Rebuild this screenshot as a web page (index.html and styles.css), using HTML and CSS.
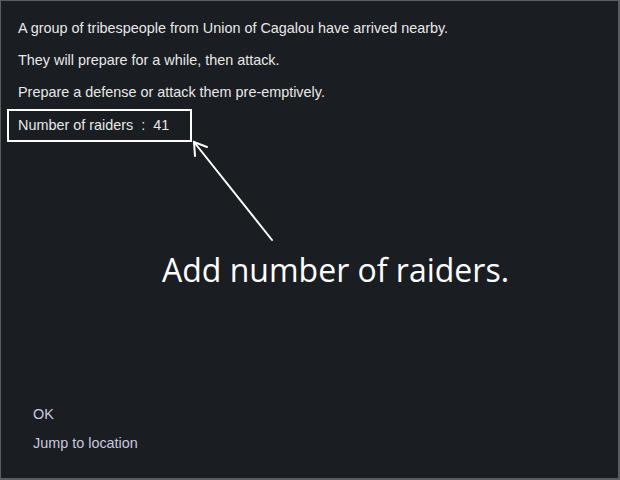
FILE: index.html
```html
<!DOCTYPE html>
<html>
<head>
<meta charset="utf-8">
<link rel="stylesheet" href="styles.css">
</head>
<body>
<div class="dialog">
  <div class="messages">
    <p class="line">A group of tribespeople from Union of Cagalou have arrived nearby.</p>
    <p class="line">They will prepare for a while, then attack.</p>
    <p class="line">Prepare a defense or attack them pre-emptively.</p>
    <p class="line highlight">Number of raiders&nbsp;&nbsp;:&nbsp;&nbsp;41</p>
  </div>
  <svg class="arrow" width="620" height="480" viewBox="0 0 620 480">
    <g stroke="#ffffff" stroke-width="2" fill="none" stroke-linecap="round">
      <line x1="272" y1="240" x2="194" y2="142"/>
      <polyline points="195,156 194,142 207,147"/>
    </g>
  </svg>
  <div class="callout">Add number of raiders.</div>
  <div class="options">
    <div class="option">OK</div>
    <div class="option">Jump to location</div>
  </div>
</div>
</body>
</html>
```
FILE: styles.css
```css
html, body {
  margin: 0;
  padding: 0;
  background: #1b1e22;
}
.dialog {
  position: relative;
  width: 620px;
  height: 480px;
  box-sizing: border-box;
  background: #1a1d21;
  border-top: 1px solid #5a5d61;
  border-left: 1px solid #5a5d61;
  border-right: 2px solid #5a5d61;
  border-bottom: 2px solid #5a5d61;
  font-family: "Liberation Sans", Arial, sans-serif;
  display: flex;
  flex-direction: column;
}
.messages {
  padding: 19px 0 0 17px;
  display: flex;
  flex-direction: column;
  align-items: flex-start;
  gap: 16px;
}
.line {
  margin: 0;
  font-size: 14.4px;
  line-height: 16px;
  color: #e8e8e8;
  white-space: nowrap;
}
.highlight {
  box-sizing: border-box;
  margin-left: -11px;
  margin-top: -7px;
  padding: 6px 9px 7px 9px;
  border: 2px solid #ffffff;
  width: 185px;
}
.arrow {
  position: absolute;
  left: -1px;
  top: -1px;
  pointer-events: none;
}
.callout {
  margin: 108px 0 0 161px;
  font-family: "Open Sans", sans-serif;
  font-size: 32px;
  line-height: 40px;
  color: #ffffff;
}
.options {
  margin-top: auto;
  padding: 0 0 27px 32px;
  display: flex;
  flex-direction: column;
  gap: 13px;
}
.option {
  font-size: 14.4px;
  line-height: 16px;
  color: #c9c9df;
}
```
